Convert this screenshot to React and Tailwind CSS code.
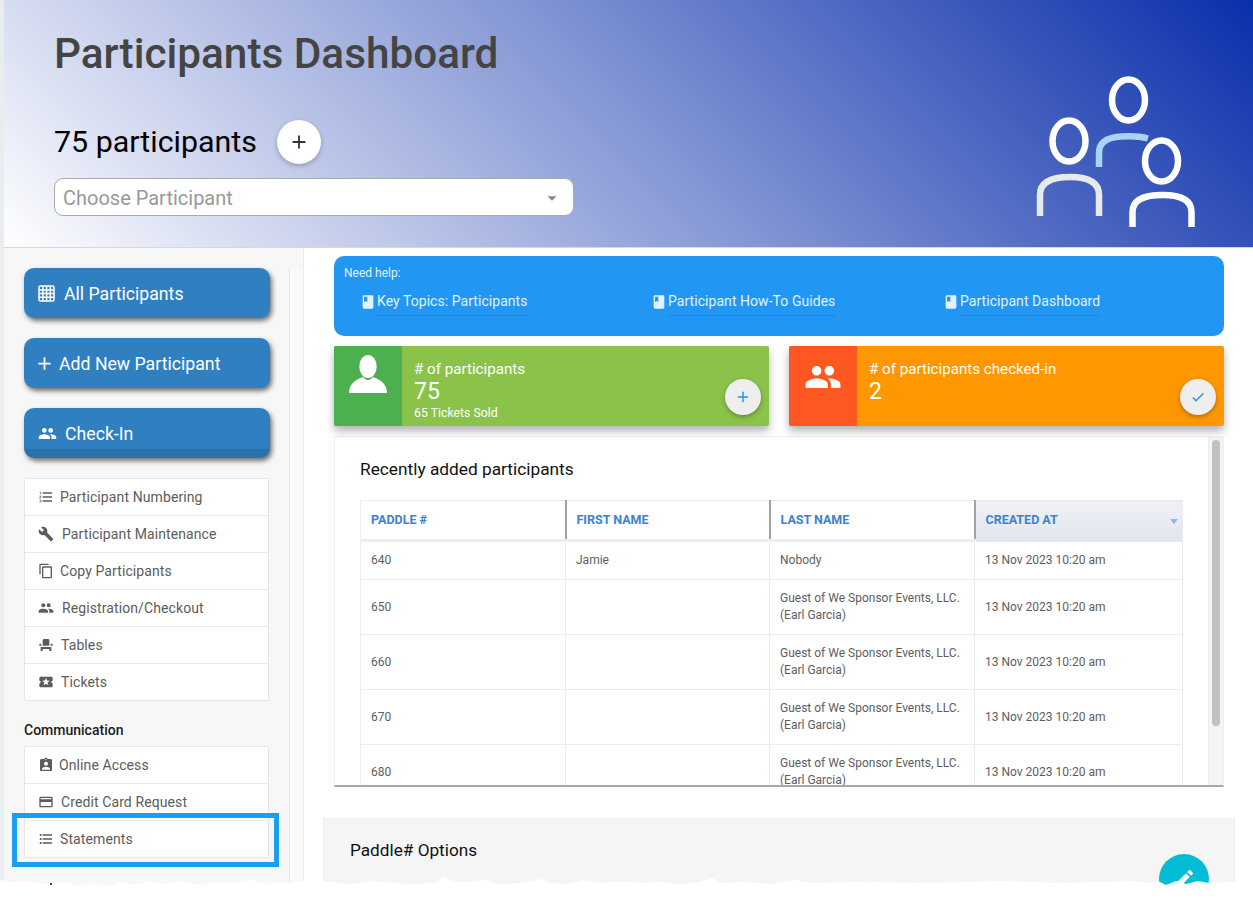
import React from "react";
import {
  MdAdd,
  MdArrowDropDown,
  MdAssignmentInd,
  MdBook,
  MdBuild,
  MdCheck,
  MdContentCopy,
  MdCreditCard,
  MdEdit,
  MdEventSeat,
  MdFormatListBulleted,
  MdFormatListNumbered,
  MdLocalActivity,
  MdPeople,
} from "react-icons/md";

const GridIcon = () => (
  <svg width="17" height="17" viewBox="0 0 17 17" fill="none" stroke="white" strokeWidth="1.5">
    <rect x="1" y="1" width="15" height="15" rx="1.5" />
    <path d="M4.9 1v15M8.6 1v15M12.3 1v15M1 4.9h15M1 8.6h15M1 12.3h15" />
  </svg>
);

// big outlined people in the header
const PeopleGraphic = () => (
  <svg width="170" height="164" viewBox="1030 68 170 164" fill="none" strokeWidth="6.5">
    <ellipse cx="1128.5" cy="100" rx="16.5" ry="20.5" stroke="white" />
    <path d="M1099 167v-14c0-11 8-15.500 22-16.500c10-.7 20 0 27 2" stroke="#a6d4f2" />
    <ellipse cx="1069" cy="141" rx="16.500" ry="20.500" stroke="white" />
    <path d="M1040 216v-21c0-13 12-18 30-18s29 5 29 18v21" stroke="#e8e9eb" />
    <ellipse cx="1161.500" cy="161" rx="16.500" ry="20.500" stroke="white" />
    <path d="M1132.500 227v-15c0-12 12-17 30-17s29 5 29 17v15" stroke="white" />
  </svg>
);

const PersonIcon = () => (
  <svg width="40" height="40" viewBox="0 0 40 40" fill="white">
    <ellipse cx="20" cy="11.500" rx="8.700" ry="11.500" />
    <path d="M1 38c0-8 5-13 14-16c1.500 2 3 3 5 3s3.500-1 5-3c9 3 14 8 14 16z" />
  </svg>
);

const ActionButton = ({ icon, label, layout, band }) => (
  <div
    className={`relative flex h-[50px] w-[246px] items-center rounded-[10px] bg-[#2f7fc1] text-[17.7px] text-white shadow-[2px_3px_5px_rgba(0,0,0,0.55)] ${layout} ${
      band ? "border-b-[9px] border-[#2b72ad] pt-[9px]" : ""
    }`}
  >
    {icon}
    <span className="pt-[2px]">{label}</span>
  </div>
);

const MenuItem = ({ icon, label, gap }) => (
  <div className={`flex h-[37px] items-center border-b border-[#e8e8e8] pl-[13px] text-[14px] tracking-[0.1px] text-[#5c5c5c] last:h-[36px] last:border-b-0 ${gap}`}>
    {icon}
    <span>{label}</span>
  </div>
);

const HelpLink = ({ label, width }) => (
  <div className={`flex items-center gap-[1px] ${width}`}>
    <MdBook size={16} className="text-[#e3f2fd]" />
    <span className="border-b border-dotted border-[#1a78c4] pb-[3px] pt-[3px] text-[14px] tracking-[0.05px] text-[#e3f2fd]">{label}</span>
  </div>
);

const StatCard = ({ tone, side, icon, title, value, note, action }) => (
  <div className={`relative flex h-[80px] w-[435px] rounded-[2px] shadow-[0_5px_9px_rgba(0,0,0,0.3)] ${tone}`}>
    <div className={`flex w-[68px] justify-center rounded-l-[2px] ${side}`}>{icon}</div>
    <div className="pl-[12px] pt-[13px] text-white">
      <div className="text-[15.15px] leading-[20px]">{title}</div>
      <div className="text-[23px] leading-[25px]">{value}</div>
      {note && <div className="text-[12.3px] leading-[18px]">{note}</div>}
    </div>
    <div className="absolute right-[8px] top-[33px] flex h-[36px] w-[36px] items-center justify-center rounded-full bg-[#eeeeee] text-[#2196f3] shadow-[0_2px_5px_rgba(0,0,0,0.3)]">
      {action}
    </div>
  </div>
);

const guest = ["Guest of We Sponsor Events, LLC.", "(Earl Garcia)"];
const rows = [
  { paddle: "640", first: "Jamie", last: ["Nobody"], h: "h-[39px]" },
  { paddle: "650", first: "", last: guest, h: "h-[55px]" },
  { paddle: "660", first: "", last: guest, h: "h-[55px]" },
  { paddle: "670", first: "", last: guest, h: "h-[55px]" },
  { paddle: "680", first: "", last: guest, h: "h-[55px]" },
];

const HeaderCell = ({ label, first }) => (
  <th className={`relative border-b-[3px] border-[#efefef] pl-[10px] text-left text-[12.5px] font-bold text-[#3a82d4] ${first ? "" : "border-l-[2px] border-l-[#a3a3a3]"}`}>
    {label}
  </th>
);

export default function App() {
  return (
    <div className="relative h-[913px] overflow-hidden bg-[#e9edf0] pl-[4px] font-['Roboto',sans-serif]">
      {/* header */}
      <header className="flex h-[248px] items-start justify-between border-b border-[#d8d8d8] bg-[linear-gradient(45deg,#ffffff,#0a2fab)] pl-[50px] pr-[53px]">
        <div className="w-[520px]">
          <h1 className="whitespace-nowrap pt-[27px] text-[42.3px] font-medium leading-[54px] text-[#444444]">Participants Dashboard</h1>
          <div className="mt-[39px] flex items-center gap-[20px]">
            <span className="text-[30.4px] leading-[44px] text-black">75 participants</span>
            <div className="flex h-[44px] w-[44px] items-center justify-center rounded-full bg-white text-[#333333] shadow-[0_2px_5px_rgba(0,0,0,0.25)]">
              <MdAdd size={22} />
            </div>
          </div>
          <div className="mt-[14px] flex h-[38px] items-center justify-between rounded-[9px] border border-[#aaaaaa] bg-white pl-[8px] pr-[10px] pt-[1px] text-[20px] text-[#999999]">
            <span>Choose Participant</span>
            <MdArrowDropDown size={22} className="text-[#888888]" />
          </div>
        </div>
        <div className="pt-[68px]">
          <PeopleGraphic />
        </div>
      </header>

      <div className="flex h-[665px]">
        {/* sidebar */}
        <div className="w-[299px] shrink-0 bg-[#fafafa]">
          <div className="h-[20px] bg-[#f7f7f7]" />
          <aside className="h-[645px] w-[286px] border-r border-[#e6e6e6] bg-[#f7f7f7] pl-[20px]">
            <div className="flex flex-col gap-[20px]">
              <ActionButton icon={<GridIcon />} label="All Participants" layout="gap-[9px] pl-[14px]" />
              <ActionButton icon={<MdAdd size={21} />} label="Add New Participant" layout="gap-[4px] pl-[10px]" />
              <ActionButton icon={<MdPeople size={19} />} label="Check-In" layout="gap-[8px] pl-[14px]" band />
            </div>
            <div className="mt-[20px] w-[245px] rounded-[2px] border border-[#e6e6e6] bg-white">
              <MenuItem icon={<MdFormatListNumbered size={16} />} label="Participant Numbering" gap="gap-[6px]" />
              <MenuItem icon={<MdBuild size={16} />} label="Participant Maintenance" gap="gap-[8px]" />
              <MenuItem icon={<MdContentCopy size={16} />} label="Copy Participants" gap="gap-[6px]" />
              <MenuItem icon={<MdPeople size={16} />} label="Registration/Checkout" gap="gap-[8px]" />
              <MenuItem icon={<MdEventSeat size={16} />} label="Tables" gap="gap-[7px]" />
              <MenuItem icon={<MdLocalActivity size={16} />} label="Tickets" gap="gap-[7px]" />
            </div>
            <h3 className="mt-[19px] text-[14px] font-medium leading-[20px] text-[#1c1c1c]">Communication</h3>
            <div className="mt-[6px] w-[245px] rounded-[2px] border border-[#e6e6e6] bg-white">
              <MenuItem icon={<MdAssignmentInd size={16} />} label="Online Access" gap="gap-[5px]" />
              <MenuItem icon={<MdCreditCard size={16} />} label="Credit Card Request" gap="gap-[7px]" />
              <MenuItem icon={<MdFormatListBulleted size={16} />} label="Statements" gap="gap-[6px]" />
            </div>
          </aside>
        </div>

        {/* main column */}
        <main className="relative flex-1 border-l border-[#ececec] bg-white pl-[30px] pr-[28px] pt-[8px]">
          <div className="h-[80px] w-[890px] rounded-[10px] bg-[#2196f3] pl-[10px] pt-[8px]">
            <div className="text-[12px] leading-[18px] text-[#e3f2fd]">Need help:</div>
            <div className="mt-[6px] flex pl-[16px]">
              <HelpLink label="Key Topics: Participants" width="w-[291px]" />
              <HelpLink label="Participant How-To Guides" width="w-[292px]" />
              <HelpLink label="Participant Dashboard" />
            </div>
          </div>

          <div className="mt-[10px] flex w-[890px] justify-between">
            <StatCard
              tone="bg-[#8bc34a]"
              side="bg-[#4caf50] pt-[9px]"
              icon={<PersonIcon />}
              title="# of participants"
              value="75"
              note="65 Tickets Sold"
              action={<MdAdd size={18} />}
            />
            <StatCard
              tone="bg-[#ff9800]"
              side="bg-[#ff5722] items-center pb-[18px]"
              icon={<MdPeople size={38} className="text-white" />}
              title="# of participants checked-in"
              value="2"
              action={<MdCheck size={16} />}
            />
          </div>

          {/* recent table */}
          <div className="mt-[10px] flex h-[351px] w-[890px] overflow-hidden border border-[#efefef] border-b-2 border-b-[#a8a8a8] bg-white">
            <div className="flex-1 overflow-hidden pl-[25px] pr-[25px] pt-[20px]">
              <h3 className="text-[17.3px] font-normal leading-[24px] text-[#111111]">Recently added participants</h3>
              <table className="mt-[19px] w-[822px] table-fixed border-collapse border border-[#ececec]">
                <colgroup>
                  <col className="w-[205px]" />
                  <col className="w-[204px]" />
                  <col className="w-[205px]" />
                  <col className="w-[208px]" />
                </colgroup>
                <thead>
                  <tr className="h-[40px]">
                    <HeaderCell label="PADDLE #" first />
                    <HeaderCell label="FIRST NAME" />
                    <HeaderCell label="LAST NAME" />
                    <th className="relative border-b-[3px] border-l-[2px] border-[#e6e8ee] border-l-[#a3a3a3] bg-[linear-gradient(to_bottom,#eff1f6,#e2e5ee)] pl-[10px] text-left text-[12.5px] font-bold text-[#3a82d4]">
                      CREATED AT
                      <span className="absolute right-[4px] top-[18px] h-0 w-0 border-x-[4px] border-t-[5px] border-x-transparent border-t-[#92b7e2]" />
                    </th>
                  </tr>
                </thead>
                <tbody>
                  {rows.map((row) => (
                    <tr key={row.paddle} className={`${row.h} border-b border-[#ececec] text-[12px] leading-[17px] text-[#5e5e5e]`}>
                      <td className="pl-[10px]">{row.paddle}</td>
                      <td className="border-l border-[#ececec] pl-[10px]">{row.first}</td>
                      <td className="border-l border-[#ececec] pl-[10px]">
                        {row.last.map((line) => (
                          <div key={line}>{line}</div>
                        ))}
                      </td>
                      <td className="border-l border-[#ececec] pl-[10px]">13 Nov 2023 10:20 am</td>
                    </tr>
                  ))}
                </tbody>
              </table>
            </div>
            <div className="w-[15px] shrink-0 border-l border-[#ececec] bg-[#f4f4f4] pl-[3px] pt-[3px]">
              <div className="h-[286px] w-[8px] rounded-full bg-[#c1c1c1]" />
            </div>
          </div>

          {/* paddle options */}
          <section className="-ml-[11px] mt-[31px] h-[120px] w-[912px] border border-[#f0f0f0] bg-[#f5f5f5] pl-[26px] pt-[20px]">
            <h3 className="text-[17.2px] font-normal leading-[22px] text-[#111111]">Paddle# Options</h3>
          </section>
          <div className="absolute left-[855px] top-[606px] flex h-[50px] w-[50px] items-center justify-center rounded-full bg-[#00bcd4] text-white">
            <MdEdit size={24} />
          </div>
        </main>
      </div>

      {/* scrap of the next sidebar icon, mostly hidden by the torn edge */}
      <svg className="absolute left-[24px] top-[878px]" width="50" height="12" viewBox="0 0 50 12" fill="#333333">
        <path d="M1 4h2v6H1zM5 5h4v2H5zM12 5h2v4h-2zM18 6h3v2h-3zM26 5h2v3h-2z" />
      </svg>
      {/* torn bottom edge of the screenshot */}
      <svg className="absolute bottom-0 left-0" width="1253" height="36" viewBox="0 0 1253 36" fill="white">
        <path d="M0 3L12 5L24 4L40 6L52 8L66 5L78 9L92 6L108 9L120 5L134 8L150 4L165 7L180 4L198 8L212 5L232 6L250 3L268 7L290 5L310 4L330 5L352 7L372 4L395 6L420 7L436 5L445 0L452 4L470 5L486 3L498 7L520 6L540 2L552 6L568 7L584 3L600 6L625 4L640 6L660 5L680 7L698 5L712 1L722 6L745 5L770 7L795 3L812 6L860 5L930 6L1000 4L1060 6L1136 4L1148 6L1160 5L1166 8L1176 4L1186 7L1198 4L1209 6L1253 4V36H0Z" />
      </svg>

      {/* highlight box */}
      <div className="absolute left-[12px] top-[813px] h-[54px] w-[267px] border-[5px] border-[#1a9ff0]" />
    </div>
  );
}
